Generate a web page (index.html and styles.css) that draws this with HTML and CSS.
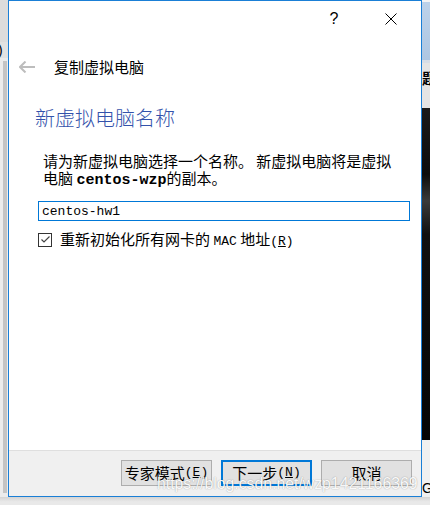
FILE: index.html
```html
<!DOCTYPE html>
<html lang="zh-CN">
<head>
<meta charset="utf-8">
<title>复制虚拟电脑</title>
<link rel="stylesheet" href="styles.css">
</head>
<body>
<div class="screen">
  <div class="left-strip">
    <div class="ls-top"></div>
    <div class="ls-paren">)</div>
    <div class="ls-bar"></div>
  </div>

  <div class="dialog">
    <div class="titlebar">
      <span class="tb-btn help">?</span>
      <span class="tb-btn close">
        <svg width="12" height="12" viewBox="0 0 12 12"><path d="M0.5 0.5 L11.5 11.5 M11.5 0.5 L0.5 11.5" stroke="#000" stroke-width="1" fill="none"/></svg>
      </span>
    </div>

    <div class="content">
      <div class="nav">
        <svg class="back" width="16" height="12" viewBox="0 0 16 12"><path d="M1 6 H16 M6.5 0.5 L1 6 L6.5 11.5" stroke="#bdbdbd" stroke-width="2" fill="none"/></svg>
        <span>复制虚拟电脑</span>
      </div>

      <div class="page">
        <h1 class="heading">新虚拟电脑名称</h1>
        <p class="desc">请为新虚拟电脑选择一个名称。 新虚拟电脑将是虚拟<br>电脑 <b class="lat-b">centos-wzp</b>的副本。</p>
        <input class="field" type="text" value="centos-hw1">
        <label class="check">
          <span class="box"><svg width="11" height="11" viewBox="0 0 11 11"><path d="M1.5 5.5 L4 8 L9.5 2.5" stroke="#444" stroke-width="1.2" fill="none"/></svg></span>
          <span>重新初始化所有网卡的 <span class="lat">MAC</span> 地址<span class="lat">(<u>R</u>)</span></span>
        </label>
      </div>
    </div>

    <div class="footer">
      <button class="btn">专家模式<span class="lat">(<u>E</u>)</span></button>
      <button class="btn primary">下一步<span class="lat">(<u>N</u>)</span></button>
      <button class="btn">取消</button>
    </div>
  </div>

  <div class="right-strip">
    <div class="rs-white"></div>
    <div class="rs-blue"></div>
    <div class="rs-line"></div>
    <div class="rs-gray"><span class="rs-char">题</span></div>
    <div class="rs-dark"></div>
    <div class="rs-light"><span class="rs-g">G</span></div>
  </div>

  <div class="bottom-strip"></div>

  <div class="watermark">https://blog.csdn.net/wzp1421166369</div>
</div>
</body>
</html>
```

FILE: styles.css
```css
html, body {
  margin: 0;
  padding: 0;
  background: #e6e6e6;
}

.screen {
  width: 430px;
  height: 505px;
  display: grid;
  grid-template-columns: 8px 414px 8px;
  grid-template-rows: 497px 8px;
  overflow: hidden;
  position: relative;
  font-family: "Noto Sans CJK SC", "Liberation Sans", sans-serif;
  color: #000;
}

/* ---------- background strips ---------- */
.left-strip {
  display: flex;
  flex-direction: column;
  background: #ececec;
  overflow: hidden;
}
.ls-top {
  height: 42px;
  background: #dcdcdc;
}
.ls-paren {
  height: 16px;
  font: 14px/16px "Liberation Sans", sans-serif;
  margin-left: -2px;
  background: #e2e2e2;
}
.ls-bar {
  flex: 1;
  margin: 3px 1px 4px 3px;
  background: #c4c4c4;
}

.right-strip {
  display: flex;
  flex-direction: column;
  overflow: hidden;
  background: #efefef;
}
.rs-white { height: 2px; background: #f4f4f4; }
.rs-blue { height: 58px; background: linear-gradient(#bcd2ea, #aec6e2); }
.rs-line { height: 3px; background: #d6dde6; }
.rs-gray {
  height: 45px;
  background: #e4e4e4;
  overflow: hidden;
}
.rs-char {
  display: block;
  margin-top: 6px;
  font: bold 15px/17px "Noto Sans CJK SC", sans-serif;
  white-space: nowrap;
}
.rs-dark {
  height: 332px;
  background: linear-gradient(#1a1a1a 0%, #0c0c0c 20%, #3a3a3a 28%, #101010 38%, #050505 100%);
}
.rs-light {
  flex: 1;
  background: #f0f0f0;
}
.rs-g {
  display: block;
  margin-top: 40px;
  font: 14px/16px "Liberation Sans", sans-serif;
}

.bottom-strip {
  grid-column: 1 / 4;
  background: linear-gradient(#d4d4d4, #e9e9e9 60%);
}

/* ---------- dialog ---------- */
.dialog {
  box-sizing: border-box;
  border: 1px solid #1a7fd6;
  background: #fff;
  display: flex;
  flex-direction: column;
  min-height: 0;
}

.titlebar {
  height: 36px;
  display: flex;
  justify-content: flex-end;
  align-items: center;
  gap: 11px;
  padding-right: 7px;
}
.tb-btn {
  width: 46px;
  height: 36px;
  display: flex;
  align-items: center;
  justify-content: center;
}
.help {
  font: 16px/16px "Liberation Sans", sans-serif;
}

.content {
  flex: 1;
}

.nav {
  margin-top: 20px;
  height: 20px;
  display: flex;
  align-items: center;
  gap: 19px;
  padding-left: 10px;
  font-size: 15px;
  line-height: 20px;
}
.back {
  display: block;
}

.page {
  padding: 0 11px 0 29px;
}

.heading {
  margin: 27px 0 0 -3px;
  font-size: 20px;
  line-height: 28px;
  font-weight: 300;
  color: #3352ab;
}

.desc {
  margin: 20px 0 0;
  padding-left: 5px;
  font-size: 15px;
  line-height: 17px;
}
.lat-b {
  font-family: "Liberation Mono", monospace;
  font-weight: bold;
  font-size: 15px;
}
.lat {
  font-family: "Liberation Mono", monospace;
  font-size: 13px;
}

.field {
  display: block;
  box-sizing: border-box;
  margin: 12px 0 0;
  width: 372px;
  height: 20px;
  border: 1px solid #0078d7;
  padding: 0 3px;
  font: 13px/18px "Liberation Mono", monospace;
  color: #000;
  background: #fff;
  outline: none;
}

.check {
  margin-top: 10px;
  height: 17px;
  display: flex;
  align-items: center;
  font-size: 15px;
  line-height: 17px;
}
.box {
  box-sizing: border-box;
  width: 14px;
  height: 14px;
  border: 1px solid #333;
  background: #fff;
  margin-right: 8px;
  display: flex;
  align-items: center;
  justify-content: center;
}
.box svg {
  display: block;
}

/* ---------- footer ---------- */
.footer {
  box-sizing: border-box;
  height: 46px;
  border-top: 1px solid #dfdfdf;
  background: #f0f0f0;
  display: flex;
  justify-content: flex-end;
  align-items: flex-start;
  gap: 9px;
  padding: 9px 9px 0 0;
}
.btn {
  box-sizing: border-box;
  width: 91px;
  height: 26px;
  padding: 0;
  margin: 0;
  background: #e1e1e1;
  border: 1px solid #adadad;
  font-family: "Noto Sans CJK SC", sans-serif;
  font-size: 15px;
  line-height: 20px;
  color: #000;
  display: flex;
  align-items: center;
  justify-content: center;
}
.btn.primary {
  border: 2px solid #0078d7;
}

/* ---------- watermark ---------- */
.watermark {
  position: absolute;
  left: 157px;
  top: 475px;
  font: 15.8px/18px "Liberation Sans", sans-serif;
  color: rgba(255, 255, 255, 0.95);
  text-shadow: 0 0 1px rgba(0, 0, 0, 0.28), 0 0 2px rgba(0, 0, 0, 0.12);
  white-space: nowrap;
  pointer-events: none;
}
```
